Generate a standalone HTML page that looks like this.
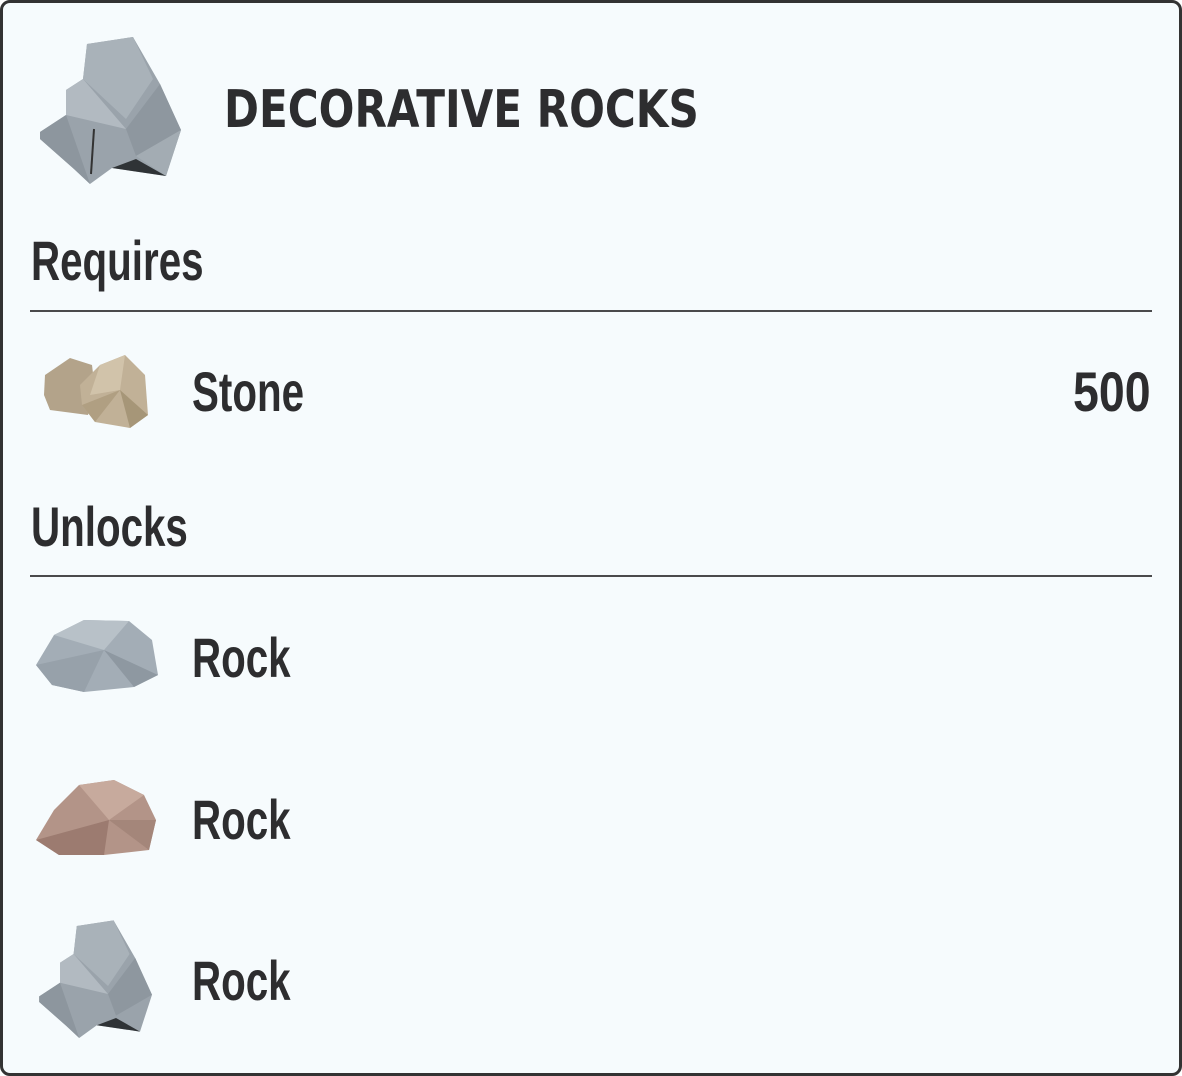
<!DOCTYPE html>
<html><head><style>
html,body{margin:0;padding:0;width:1182px;height:1076px;background:#fff;overflow:hidden}
.card{position:absolute;left:0;top:0;width:1176px;height:1070px;border:3px solid #333;border-radius:10px;background:#f6fbfd}
.t{position:absolute;font-family:"Liberation Sans Narrow","Liberation Sans",sans-serif;font-weight:bold;color:#2d2d2f;transform-origin:0 0;white-space:nowrap;line-height:1}
.hr{position:absolute;left:30px;width:1122px;height:2px;background:#4a4a4c}
svg{position:absolute}
</style></head><body>
<div class="card"></div>
<svg style="left:36px;top:34px" width="150" height="155" viewBox="0 0 150 155">
<polygon points="51,10 97,3 124,50 145,96 130,142 76,134 54,150 38,135 4,105 4,98 30,81 30,56 47,45" fill="#9aa3ab"/>
<polygon points="51,10 97,3 117,45 90,85 47,45" fill="#a9b2b9"/>
<polygon points="30,56 47,45 90,95 30,81" fill="#b2bac1"/>
<polygon points="90,95 124,50 145,96 100,122" fill="#8e979f"/>
<polygon points="4,98 30,81 54,150 38,135 4,105" fill="#8d969e"/>
<polygon points="100,122 145,96 130,142" fill="#a3acb3"/>
<polygon points="100,125 130,142 76,134" fill="#2f3336"/>
<line x1="58" y1="95" x2="55" y2="140" stroke="#333" stroke-width="2"/>
</svg>
<div class="t" style="left:224px;top:84px;font-size:52px;font-family:'DejaVu Sans','Liberation Sans',sans-serif;transform:scaleX(0.81)">DECORATIVE ROCKS</div>
<div class="t" style="left:31px;top:233px;font-size:56px;transform:scaleX(0.72)">Requires</div>
<div class="hr" style="top:310px"></div>
<svg style="left:40px;top:350px" width="112" height="82" viewBox="0 0 112 82">
<polygon points="5,25 30,8 52,15 55,40 48,65 10,60 4,45" fill="#b3a38a"/>
<polygon points="40,35 60,15 85,5 105,25 108,65 90,78 55,72 42,55" fill="#c1b197"/>
<polygon points="60,15 85,5 80,40 50,45" fill="#d1c3aa"/>
<polygon points="80,40 108,65 90,78" fill="#a69678"/>
<polygon points="42,55 80,40 55,72" fill="#b09f82"/>
</svg>
<div class="t" style="left:192px;top:364px;font-size:56px;transform:scaleX(0.72)">Stone</div>
<div class="t" style="left:1073px;top:364px;font-size:56px;transform:scaleX(0.83)">500</div>
<div class="t" style="left:31px;top:499px;font-size:56px;transform:scaleX(0.72)">Unlocks</div>
<div class="hr" style="top:575px"></div>
<svg style="left:34px;top:615px" width="126" height="82" viewBox="0 0 126 82">
<polygon points="2,50 20,20 50,5 95,6 118,25 124,60 100,72 50,77 18,70" fill="#a3adb6"/>
<polygon points="20,20 50,5 95,6 70,35" fill="#b8c1c8"/>
<polygon points="2,50 70,35 50,77 18,70" fill="#97a1aa"/>
<polygon points="70,35 124,60 100,72" fill="#8e98a1"/>
</svg>
<div class="t" style="left:192px;top:630px;font-size:56px;transform:scaleX(0.72)">Rock</div>
<svg style="left:34px;top:775px" width="126" height="85" viewBox="0 0 126 85">
<polygon points="2,65 20,35 45,10 80,5 110,20 122,45 115,75 70,80 25,80" fill="#b39488"/>
<polygon points="45,10 80,5 110,20 75,45" fill="#c7aa9d"/>
<polygon points="2,65 75,45 70,80 25,80" fill="#9c7b70"/>
<polygon points="75,45 122,45 115,75" fill="#a4867a"/>
</svg>
<div class="t" style="left:192px;top:792px;font-size:56px;transform:scaleX(0.72)">Rock</div>
<svg style="left:36px;top:918px" width="120" height="124" viewBox="0 0 150 155">
<polygon points="51,10 97,3 124,50 145,96 130,142 76,134 54,150 38,135 4,105 4,98 30,81 30,56 47,45" fill="#9aa3ab"/>
<polygon points="51,10 97,3 117,45 90,85 47,45" fill="#a9b2b9"/>
<polygon points="30,56 47,45 90,95 30,81" fill="#b2bac1"/>
<polygon points="90,95 124,50 145,96 100,122" fill="#8e979f"/>
<polygon points="4,98 30,81 54,150 38,135 4,105" fill="#8d969e"/>
<polygon points="100,125 130,142 76,134" fill="#2f3336"/>
</svg>
<div class="t" style="left:192px;top:953px;font-size:56px;transform:scaleX(0.72)">Rock</div>
</body></html>
